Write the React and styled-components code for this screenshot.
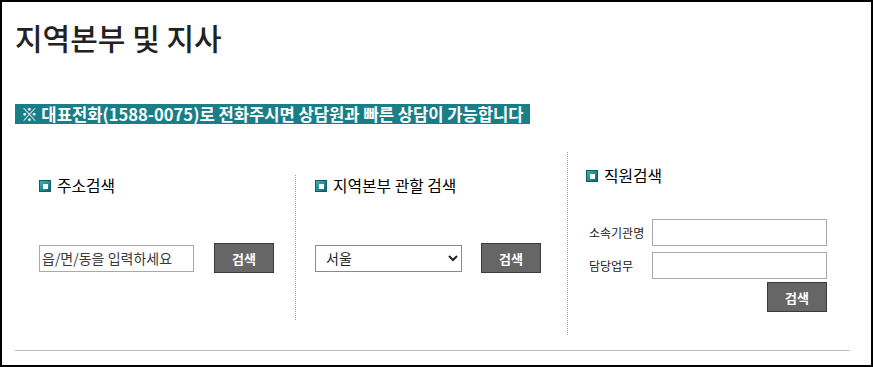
import React from 'react'
import styled, { createGlobalStyle } from 'styled-components'

const Global = createGlobalStyle`
* { box-sizing: border-box; }
html, body { margin: 0; padding: 0; background: #fff; }
body { font-family: "Noto Sans CJK KR", "Noto Sans", sans-serif; color: #222; }
`

export const Frame = styled.div`
width: 873px;
height: 367px;
border: 2px solid #000;
padding: 0 21px 0 13px;
background: #fff;
`
export const Title = styled.h1`
margin: 14px 0 0;
font-size: 30px;
line-height: 42px;
font-weight: 500;
color: #222;
letter-spacing: 0;
`
export const Notice = styled.p`
display: inline-block;
margin: 46px 0 0;
padding: 0 6px;
background: #1a7e86;
color: #fff;
font-size: 16.6px;
line-height: 20px;
font-weight: 700;
white-space: nowrap;
`
export const Columns = styled.div`
display: flex;
align-items: flex-start;
margin-top: 26px;
`
export const Col = styled.div`  //top='..' height='..' width='..'
width: ${props => props.width}px;
height: ${props => props.height}px;
margin-top: ${props => props.top || 0}px;
padding: ${props => props.pad || '0 0 0 24px'};
border-left: ${props => props.line ? '1px dotted #9a9a9a' : 'none'};
display: flex;
flex-direction: column;
`
export const Head = styled.h2`
display: flex;
align-items: center;
gap: 6px;
margin: 0;
font-size: 15.8px;
line-height: 22px;
font-weight: 400;
color: #000;
`
export const Mark = styled.span`
width: 12px;
height: 12px;
background: linear-gradient(135deg, #3bb2ba, #0f6970);
border: 1px solid #0d5e64;
display: flex;
align-items: center;
justify-content: center;
&::after{
    content: '';
    width: 5px;
    height: 5px;
    background: #fff;
}
`
export const Row = styled.div`
display: flex;
align-items: center;
gap: ${props => props.gap || 20}px;
margin-top: ${props => props.top || 0}px;
`
export const Input = styled.input`
width: ${props => props.w}px;
height: 27px;
border: 1px solid #a9a9a9;
padding: 0 2px;
font-family: inherit;
font-size: 14px;
color: #333;
outline: none;
&::placeholder{ color: #3a3a3a; }
`
export const Select = styled.select`
width: 147px;
height: 27px;
border: 1px solid #8a8a8a;
border-radius: 0;
padding: 0 6px;
font-family: inherit;
font-size: 14px;
color: #222;
background: #fff;
`
export const Button = styled.button`
width: 60px;
height: 30px;
background: #666;
border: 1px solid #3a3a3a;
color: #fff;
font-family: inherit;
font-size: 13px;
font-weight: 700;
cursor: pointer;
align-self: ${props => props.right ? 'flex-end' : 'auto'};
margin-top: ${props => props.top || 0}px;
`
export const Field = styled.label`
display: grid;
grid-template-columns: 63px 175px;
align-items: center;
margin-top: ${props => props.top || 0}px;
padding-left: 3px;
font-size: 12px;
color: #222;
`
export const Rule = styled.hr`
margin: 15px 0 0;
border: 0;
border-top: 1px solid #bdbdbd;
`

export default function App() {
  return (
    <>
      <Global />
      <Frame>
        <Title>지역본부 및 지사</Title>
        <Notice>※ 대표전화(1588-0075)로 전화주시면 상담원과 빠른 상담이 가능합니다</Notice>
        <Columns>
          <Col width={280} height={145} top={23}>
            <Head><Mark />주소검색</Head>
            <Row top={46}>
              <Input w={155} placeholder="읍/면/동을 입력하세요" />
              <Button>검색</Button>
            </Row>
          </Col>
          <Col width={272} height={145} top={23} line pad="0 0 0 19px">
            <Head><Mark />지역본부 관할 검색</Head>
            <Row top={46} gap={19}>
              <Select defaultValue="서울">
                <option>서울</option>
                <option>부산</option>
                <option>대구</option>
              </Select>
              <Button>검색</Button>
            </Row>
          </Col>
          <Col width={283} height={183} line pad="13px 23px 0 18px">
            <Head><Mark />직원검색</Head>
            <Field top={32}>소속기관명<Input w={175} /></Field>
            <Field top={6}>담당업무<Input w={175} /></Field>
            <Button right top={3}>검색</Button>
          </Col>
        </Columns>
        <Rule />
      </Frame>
    </>
  )
}
